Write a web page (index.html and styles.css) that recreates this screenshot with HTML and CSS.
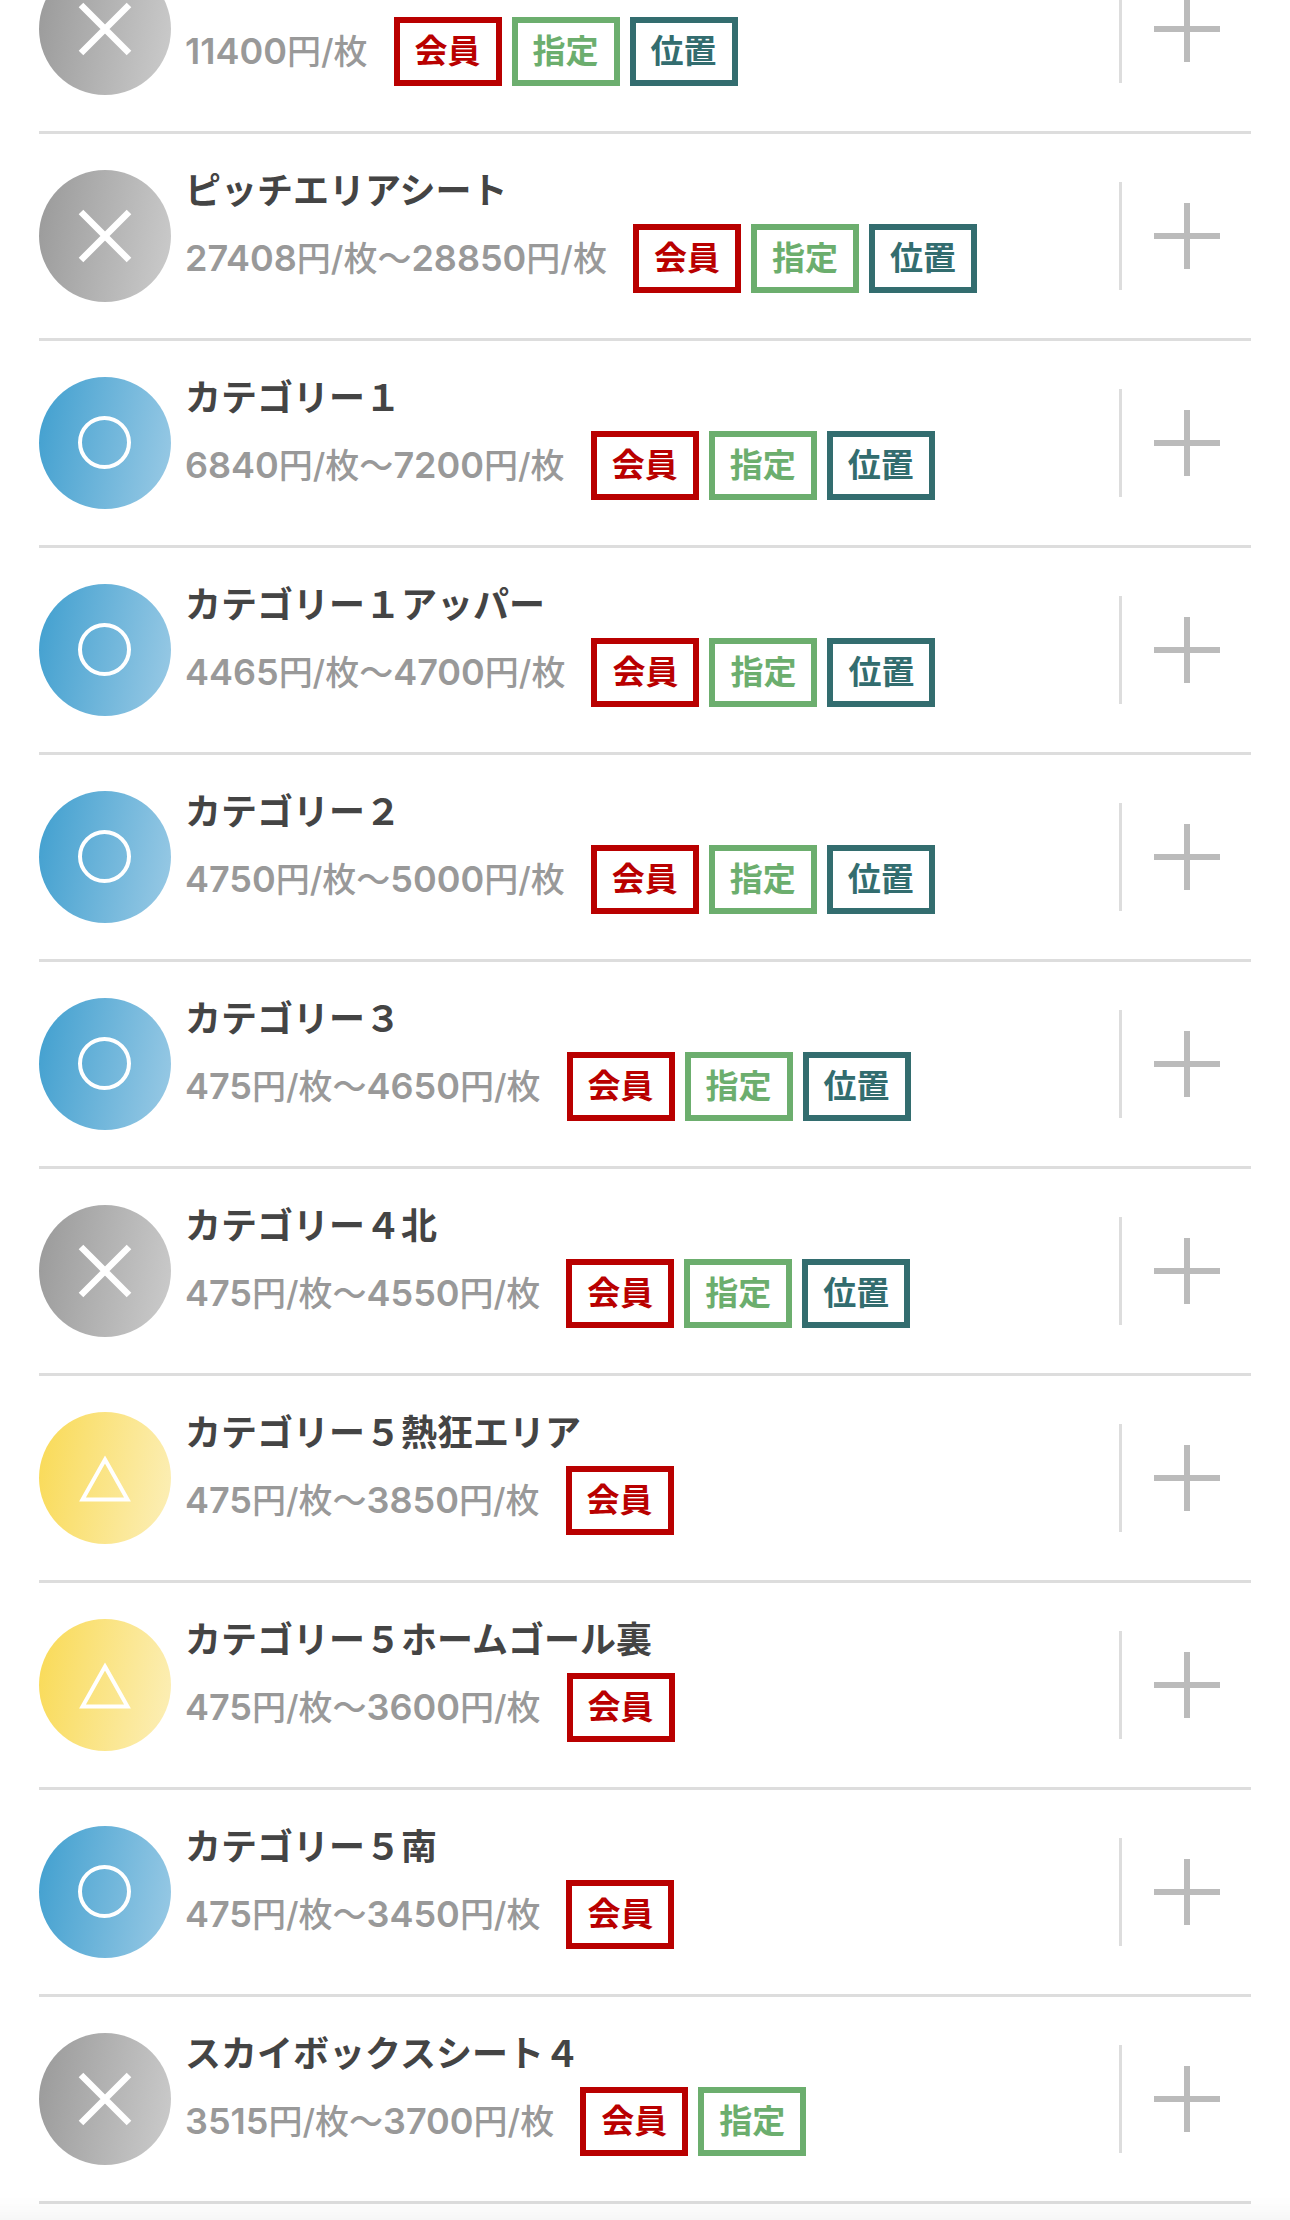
FILE: index.html
```
<!DOCTYPE html>
<html lang="ja">
<head>
<meta charset="utf-8">
<meta name="viewport" content="width=device-width, initial-scale=1">
<title>席種一覧</title>
<link rel="stylesheet" href="styles.css">
</head>
<body>
<svg class="sprite" aria-hidden="true">
  <symbol id="cross" viewBox="0 0 54 54"><path d="M3 3 51 51M51 3 3 51" stroke="#fff" stroke-width="6.5"/></symbol>
  <symbol id="ring" viewBox="0 0 54 54"><circle cx="26.5" cy="26.5" r="24.5" fill="none" stroke="#fff" stroke-width="4"/></symbol>
  <symbol id="tri" viewBox="0 0 54 54"><path d="M27 8.500 49.500 48.500H4.500Z" fill="none" stroke="#fff" stroke-width="4"/></symbol>
</svg>
<main>
<ul class="seats" id="seats"></ul>
</main>
<div class="footer-shade"></div>
<script src="seats.js"></script>
</body>
</html>
```
FILE: styles.css
```
* { box-sizing: border-box; }
body {
  margin: 0;
  background: #fff;
  color: #444;
  font-family: Inter, "Noto Sans CJK JP", sans-serif;
}
.sprite { position: absolute; width: 0; height: 0; }
main { overflow: hidden; }
.seats { list-style: none; margin: -73px 39px 0; padding: 0; }
.seat {
  display: flex;
  align-items: center;
  gap: 14px;
  padding: 36px 0;
  border-bottom: 3px solid #ddd;
}
.status {
  flex: none;
  display: grid;
  place-items: center;
  width: 132px;
  height: 132px;
  border-radius: 50%;
}
.status svg { width: 54px; height: 54px; }
.cross { background: linear-gradient(100deg, #999, #ccc); }
.ring { background: linear-gradient(100deg, #409fcf, #9acae5); }
.tri { background: linear-gradient(100deg, #f9da55, #fcefb9); }
.info { flex: 1; min-width: 0; padding-bottom: 9px; }
.name { margin: 0; font-size: 36px; line-height: 42px; font-weight: 600; }
.detail { display: flex; align-items: center; gap: 26px; margin-top: 12px; }
.price { color: #999; font-size: 34px; line-height: 69px; font-weight: 500; }
.num { font-size: 36px; font-weight: 600; line-height: 1; }
.badges { display: flex; gap: 10px; }
.badge {
  padding: 0 15px;
  border: 6px solid;
  font-size: 33px;
  line-height: 57px;
  font-weight: 600;
}
.member { color: #b90000; }
.reserved { color: #6cae6e; }
.place { color: #336d6f; }
.more {
  flex: none;
  display: grid;
  place-items: center;
  width: 132px;
  height: 108px;
  padding: 0;
  border: 0;
  border-left: 3px solid #ddd;
  background: none;
}
.more svg { width: 66px; height: 66px; }
.footer-shade {
  position: fixed;
  inset: auto 0 0;
  height: 24px;
  background: linear-gradient(transparent, rgba(0, 0, 0, .03));
}
```
FILE: seats.js
```
const labels = {
  member: "会員",
  reserved: "指定",
  place: "位置",
};
const all = ["member", "reserved", "place"];
const seats = [
  ["cross", "ピッチサイドシート", "11400円/枚", all],
  ["cross", "ピッチエリアシート", "27408円/枚〜28850円/枚", all],
  ["ring", "カテゴリー１", "6840円/枚〜7200円/枚", all],
  ["ring", "カテゴリー１アッパー", "4465円/枚〜4700円/枚", all],
  ["ring", "カテゴリー２", "4750円/枚〜5000円/枚", all],
  ["ring", "カテゴリー３", "475円/枚〜4650円/枚", all],
  ["cross", "カテゴリー４北", "475円/枚〜4550円/枚", all],
  ["tri", "カテゴリー５熱狂エリア", "475円/枚〜3850円/枚", ["member"]],
  ["tri", "カテゴリー５ホームゴール裏", "475円/枚〜3600円/枚", ["member"]],
  ["ring", "カテゴリー５南", "475円/枚〜3450円/枚", ["member"]],
  ["cross", "スカイボックスシート４", "3515円/枚〜3700円/枚", ["member", "reserved"]],
];
document.getElementById("seats").innerHTML = seats.map(([status, name, price, badges]) => `
  <li class="seat">
    <span class="status ${status}"><svg aria-hidden="true"><use href="#${status}"/></svg></span>
    <div class="info">
      <h2 class="name">${name}</h2>
      <div class="detail">
        <span class="price">${price.replace(/\d+/g, '<span class="num">$&</span>')}</span>
        <span class="badges">${badges.map((b) => `<span class="badge ${b}">${labels[b]}</span>`).join("")}</span>
      </div>
    </div>
    <button class="more" type="button" aria-label="${name}を開く">
      <svg viewBox="0 0 66 66" aria-hidden="true"><path d="M33 0V66M0 33H66" stroke="#bbb" stroke-width="6"/></svg>
    </button>
  </li>`).join("");
```
